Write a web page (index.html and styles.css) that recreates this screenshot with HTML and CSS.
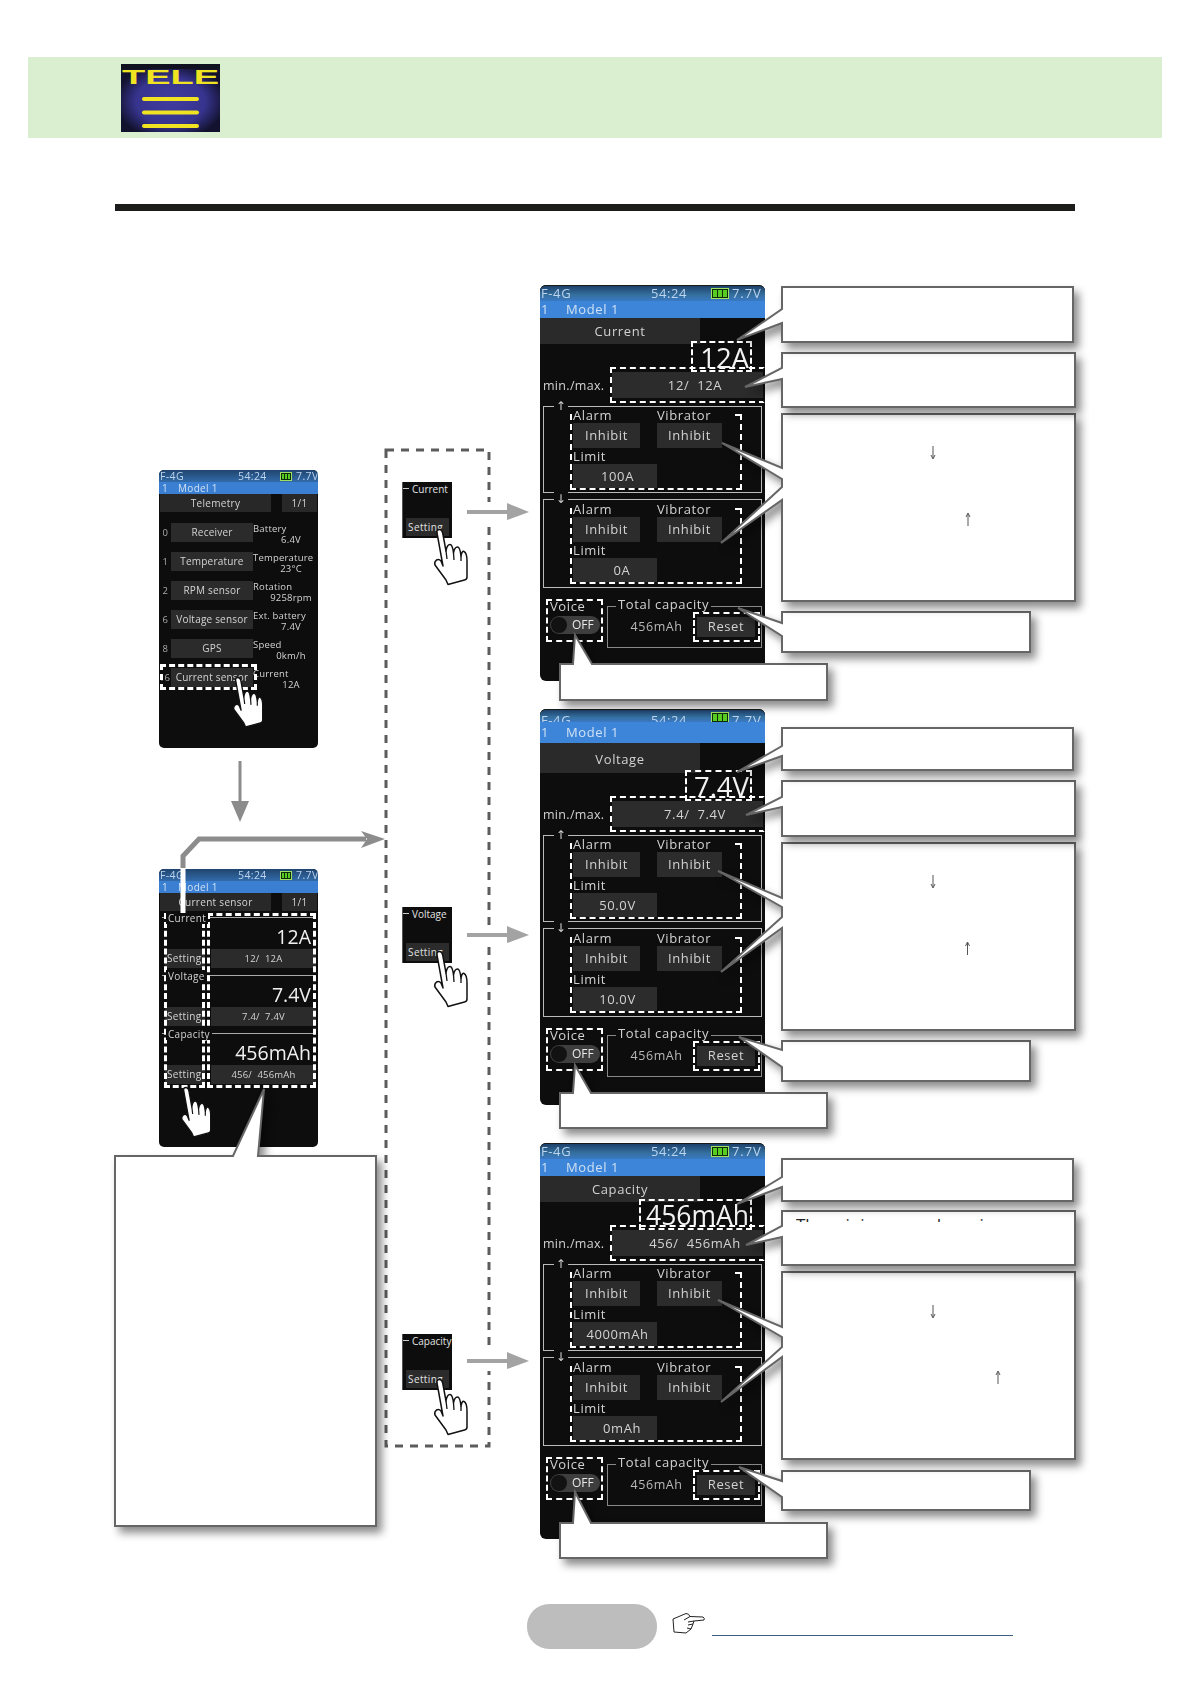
FILE: index.html
```html
<!DOCTYPE html>
<html lang="en">
<head>
<meta charset="utf-8">
<title>Telemetry</title>
<link rel="stylesheet" href="styles.css">
</head>
<body>
<div class="page">
  <header class="band">
    <svg class="logo" viewBox="0 0 99 68" width="99" height="68">
      <defs>
        <radialGradient id="lg" cx="50%" cy="55%" r="56%">
          <stop offset="0" stop-color="#3f3c9f"/>
          <stop offset=".62" stop-color="#37348f"/>
          <stop offset="1" stop-color="#12122e"/>
        </radialGradient>
      </defs>
      <rect width="99" height="68" fill="url(#lg)"/>
      <rect width="99" height="5" fill="#101020"/>
      <text x="1" y="20" font-family="Liberation Sans" font-weight="700" font-size="21" fill="#f0e422" textLength="97" lengthAdjust="spacingAndGlyphs">TELE</text>
      <g stroke="#f0e422" stroke-width="4" stroke-linecap="round">
        <line x1="23" x2="76" y1="35" y2="35"/>
        <line x1="23" x2="76" y1="48.500" y2="48.500"/>
        <line x1="23" x2="76" y1="62" y2="62"/>
      </g>
    </svg>
  </header>
  <div class="rule"></div>

  <main class="diagram">
    <section class="screen-sm node-tele">
      <div class="sm-status"><span>F-4G</span><span>54:24</span><i class="batt"><b></b><b></b><b></b></i><span>7.7V</span></div>
      <div class="sm-model"><span>1</span><span>Model 1</span></div>
      <div class="sm-title"><span class="tab">Telemetry</span><span class="page-no">1/1</span></div>
      <ul class="tele-list">
        <li><span class="num">0</span><span class="tbtn">Receiver</span><span class="info"><em>Battery</em><strong>6.4V</strong></span></li>
        <li><span class="num">1</span><span class="tbtn">Temperature</span><span class="info"><em>Temperature</em><strong>23°C</strong></span></li>
        <li><span class="num">2</span><span class="tbtn">RPM sensor</span><span class="info"><em>Rotation</em><strong>9258rpm</strong></span></li>
        <li><span class="num">6</span><span class="tbtn">Voltage sensor</span><span class="info"><em>Ext. battery</em><strong>7.4V</strong></span></li>
        <li><span class="num">8</span><span class="tbtn">GPS</span><span class="info"><em>Speed</em><strong>0km/h</strong></span></li>
        <li><span class="num">16</span><span class="tbtn">Current sensor</span><span class="info"><em>Current</em><strong>12A</strong></span></li>
      </ul>
      <div class="mark mark-row"></div>
    </section>

    <section class="screen-sm node-sensor">
      <div class="sm-status"><span>F-4G</span><span>54:24</span><i class="batt"><b></b><b></b><b></b></i><span>7.7V</span></div>
      <div class="sm-model"><span>1</span><span>Model 1</span></div>
      <div class="sm-title"><span class="tab">Current sensor</span><span class="page-no">1/1</span></div>
      <div class="sec"><span class="sec-name">Current</span><span class="set">Setting</span><div class="sec-right"><span class="big">12A</span><span class="bar">12/&nbsp; 12A</span></div></div>
      <div class="sec"><span class="sec-name">Voltage</span><span class="set">Setting</span><div class="sec-right"><span class="big">7.4V</span><span class="bar">7.4/&nbsp; 7.4V</span></div></div>
      <div class="sec"><span class="sec-name">Capacity</span><span class="set">Setting</span><div class="sec-right"><span class="big">456mAh</span><span class="bar">456/&nbsp; 456mAh</span></div></div>
      <div class="mark mark-left"></div>
      <div class="mark mark-right"></div>
    </section>

    <div class="chip chip-current"><span class="chip-name">Current</span><span class="chip-set">Setting</span></div>
    <div class="chip chip-voltage"><span class="chip-name">Voltage</span><span class="chip-set">Setting</span></div>
    <div class="chip chip-capacity"><span class="chip-name">Capacity</span><span class="chip-set">Setting</span></div>

    <section class="screen-lg node-current">
      <div class="lg-status"><span>F-4G</span><span>54:24</span><i class="batt"><b></b><b></b><b></b></i><span>7.7V</span></div>
      <div class="lg-model"><span>1</span><span>Model 1</span></div>
      <div class="lg-title"><span class="lg-tab">Current</span></div>
      <div class="lg-value"><span>12A</span></div>
      <div class="lg-minmax"><span class="mm-label">min./max.</span><div class="mm-box"><span class="mm-btn">12/&nbsp; 12A</span></div></div>
      <div class="group"><span class="legend">↑</span><div class="fields"><span class="lbl top">Alarm</span><span class="lbl top">Vibrator</span><span class="fbtn">Inhibit</span><span class="fbtn fbtn-b">Inhibit</span><span class="lbl wide">Limit</span><span class="fbtn limit">100A</span></div></div>
      <div class="group group-down"><span class="legend">↓</span><div class="fields"><span class="lbl top">Alarm</span><span class="lbl top">Vibrator</span><span class="fbtn">Inhibit</span><span class="fbtn fbtn-b">Inhibit</span><span class="lbl wide">Limit</span><span class="fbtn limit limit-short">0A</span></div></div>
      <div class="lg-bottom"><div class="voice"><span>Voice</span><span class="toggle"><i></i>OFF</span></div><div class="total"><span class="total-name">Total capacity</span><span class="total-val">456mAh</span><div class="reset"><span>Reset</span></div></div></div>
    </section>

    <section class="screen-lg tall node-voltage">
      <div class="lg-status"><span>F-4G</span><span>54:24</span><i class="batt"><b></b><b></b><b></b></i><span>7.7V</span></div>
      <div class="lg-model"><span>1</span><span>Model 1</span></div>
      <div class="lg-title"><span class="lg-tab">Voltage</span></div>
      <div class="lg-value"><span>7.4V</span></div>
      <div class="lg-minmax"><span class="mm-label">min./max.</span><div class="mm-box"><span class="mm-btn">7.4/&nbsp; 7.4V</span></div></div>
      <div class="group"><span class="legend">↑</span><div class="fields"><span class="lbl top">Alarm</span><span class="lbl top">Vibrator</span><span class="fbtn">Inhibit</span><span class="fbtn fbtn-b">Inhibit</span><span class="lbl wide">Limit</span><span class="fbtn limit">50.0V</span></div></div>
      <div class="group group-down"><span class="legend">↓</span><div class="fields"><span class="lbl top">Alarm</span><span class="lbl top">Vibrator</span><span class="fbtn">Inhibit</span><span class="fbtn fbtn-b">Inhibit</span><span class="lbl wide">Limit</span><span class="fbtn limit">10.0V</span></div></div>
      <div class="lg-bottom"><div class="voice"><span>Voice</span><span class="toggle"><i></i>OFF</span></div><div class="total"><span class="total-name">Total capacity</span><span class="total-val">456mAh</span><div class="reset"><span>Reset</span></div></div></div>
    </section>

    <section class="screen-lg node-capacity">
      <div class="lg-status"><span>F-4G</span><span>54:24</span><i class="batt"><b></b><b></b><b></b></i><span>7.7V</span></div>
      <div class="lg-model"><span>1</span><span>Model 1</span></div>
      <div class="lg-title"><span class="lg-tab">Capacity</span></div>
      <div class="lg-value lg-value-long"><span>456mAh</span></div>
      <div class="lg-minmax"><span class="mm-label">min./max.</span><div class="mm-box"><span class="mm-btn">456/&nbsp; 456mAh</span></div></div>
      <div class="group"><span class="legend">↑</span><div class="fields"><span class="lbl top">Alarm</span><span class="lbl top">Vibrator</span><span class="fbtn">Inhibit</span><span class="fbtn fbtn-b">Inhibit</span><span class="lbl wide">Limit</span><span class="fbtn limit">4000mAh</span></div></div>
      <div class="group group-down"><span class="legend">↓</span><div class="fields"><span class="lbl top">Alarm</span><span class="lbl top">Vibrator</span><span class="fbtn">Inhibit</span><span class="fbtn fbtn-b">Inhibit</span><span class="lbl wide">Limit</span><span class="fbtn limit limit-short">0mAh</span></div></div>
      <div class="lg-bottom"><div class="voice"><span>Voice</span><span class="toggle"><i></i>OFF</span></div><div class="total"><span class="total-name">Total capacity</span><span class="total-val">456mAh</span><div class="reset"><span>Reset</span></div></div></div>
    </section>

    <svg class="overlay" viewBox="0 211 1190 1393" width="1190" height="1393">
      <defs>
        <g id="hand">
          <path class="hand-fill" d="M9 37 L3 4 Q2.500 .5 5.500 .5 Q8 .5 8.700 4 L12 22 Q13 15.500 16 15.500 Q18.500 15.500 19.500 24 Q20.500 18 23.500 18 Q26 18 27 27 Q28 21.500 30 22.500 Q33 24 33 32 L33 48 Q33 50.500 30.500 51 L14 55.500 L12 51 L1 36 Q0 33 2.500 31 Q5 29.500 7 32 Z"/>
          <path class="hand-line" d="M12 22 L13 30 M19.500 24 L20 31 M27 27 L27 32"/>
        </g>
      </defs>

      <rect class="group-box" x="386" y="450" width="103" height="996"/>
      <line class="gap" x1="480" x2="500" y1="512" y2="512"/>
      <line class="gap" x1="480" x2="500" y1="935" y2="935"/>
      <line class="gap" x1="480" x2="500" y1="1361" y2="1361"/>

      <g class="arrow-light">
        <path d="M467 510 H507 V503 L529 512 L507 520 V514 H467 Z"/>
        <path d="M467 933 H507 V926 L529 935 L507 943 V937 H467 Z"/>
        <path d="M467 1359 H507 V1352 L529 1361 L507 1369 V1363 H467 Z"/>
      </g>
      <path class="arrow-dark" d="M238.500 761 H241.500 V801 H249 L240 822 L231 801 H238.500 Z"/>
      <path class="elbow" d="M183 868 V856 L199 839 H366"/>
      <path class="elbow-white" d="M183 868 V913"/>
      <path class="arrow-dark" d="M385 839 L361 831 L367 839 L361 848 Z"/>

      <g class="callouts">
        <path d="M115 1156 H233 L264 1089 L258 1156 H376 V1526 H115 Z"/>

        <path d="M560 664 H573 L575 635 L592 664 H827 V700 H560 Z"/>
        <path d="M782 612 H1030 V652 H782 V636 L738 608 L782 623 Z"/>
        <path d="M782 414 H1075 V601 H782 V500 L721 543 L782 487 V479 L722 443 L782 468 Z"/>
        <path d="M782 353 H1075 V407 H782 V379 L745 387 L782 368 Z"/>
        <path d="M782 287 H1073 V342 H782 V323 L737 340 L782 309 Z"/>

        <path d="M560 1093 H573 L575 1065 L591 1093 H827 V1128 H560 Z"/>
        <path d="M782 1041 H1030 V1081 H782 V1067 L739 1037 L782 1050 Z"/>
        <path d="M782 843 H1075 V1030 H782 V928 L721 972 L782 917 V907 L718 871 L782 898 Z"/>
        <path d="M782 781 H1075 V836 H782 V807 L746 815 L782 797 Z"/>
        <path d="M782 728 H1073 V770 H782 V756 L737 772 L782 746 Z"/>

        <path d="M560 1523 H573 L575 1492 L591 1523 H827 V1558 H560 Z"/>
        <path d="M782 1471 H1030 V1510 H782 V1497 L739 1467 L782 1481 Z"/>
        <path d="M782 1272 H1075 V1459 H782 V1357 L721 1402 L782 1347 V1337 L718 1300 L782 1327 Z"/>
        <path d="M782 1211 H1075 V1265 H782 V1237 L746 1245 L782 1226 Z"/>
        <path d="M782 1159 H1073 V1201 H782 V1187 L737 1204 L782 1177 Z"/>
      </g>

      <g class="mini-arrows">
        <path d="M933 446 V458 M931 455 L933 459 L935 455"/>
        <path d="M968 526 V514 M966 517 L968 513 L970 517"/>
        <path d="M933 875 V887 M931 884 L933 888 L935 884"/>
        <path d="M967.500 955 V943 M965.500 946 L967.500 942 L969.500 946"/>
        <path d="M933 1305 V1317 M931 1314 L933 1318 L935 1314"/>
        <path d="M998 1384 V1372 M996 1375 L998 1371 L1000 1375"/>
      </g>

      <use href="#hand" transform="translate(233 677) scale(.9)"/>
      <use href="#hand" transform="translate(181 1087) scale(.9)"/>
      <use href="#hand" transform="translate(434 529)"/>
      <use href="#hand" transform="translate(434 951)"/>
      <use href="#hand" transform="translate(434 1379)"/>
    </svg>
    <span class="cut-text">The minimum and maximum</span>
  </main>

  <footer class="foot">
    <div class="pill"></div>
    <svg class="point" viewBox="0 0 34 21" width="34" height="21">
      <path d="M1 6 L14 .5 Q17 .5 18 3.500 L31 4 Q33 5 32 7 L22 8 L21 11 L19 16 L14 20 L2 19 Z M18 3.500 L12 7 M22 8 L16 9 M21 11 L16 12 M19 16 L15 15" fill="#fff" stroke="#222" stroke-width="1"/>
    </svg>
    <div class="link-line"></div>
  </footer>
</div>
</body>
</html>
```

FILE: styles.css
```css
* { box-sizing: border-box; }
html, body { margin: 0; background: #fff; }
body { font-family: "Open Sans", "DejaVu Sans", sans-serif; }
.page { width: 1190px; height: 1684px; overflow: hidden; }

/* header */
.band {
  margin: 57px 28px 0;
  height: 81px;
  padding: 7px 0 0 93px;
  background: #d9efcf;
}
.logo { display: block; }
.rule { margin: 66px 0 0 115px; width: 960px; height: 7px; background: #1d1d1b; }

/* free canvas */
.diagram { position: relative; height: 1393px; }
.overlay { position: absolute; left: 0; top: 0; pointer-events: none; }
.node-tele { left: 159px; top: 259px; }
.node-sensor { left: 159px; top: 658px; }
.node-current { left: 540px; top: 74px; }
.node-voltage { left: 540px; top: 498px; }
.node-capacity { left: 540px; top: 932px; }
.chip-current { left: 402px; top: 271px; }
.chip-voltage { left: 402px; top: 696px; }
.chip-capacity { left: 402px; top: 1123px; }

.group-box { fill: none; stroke: #5c5c5c; stroke-width: 3; stroke-dasharray: 8 7; }
.gap { stroke: #fff; stroke-width: 20; }
.arrow-light { fill: #a3a3a3; }
.arrow-dark { fill: #8c8c8c; }
.elbow { fill: none; stroke: #8c8c8c; stroke-width: 5; }
.elbow-white { fill: none; stroke: #fff; stroke-width: 5; }
.callouts path {
  fill: #fff;
  stroke: #666;
  stroke-width: 2;
  filter: drop-shadow(5px 6px 4px rgba(0, 0, 0, .45));
}
.mini-arrows path { fill: none; stroke: #555; stroke-width: 1; }
.hand-fill { fill: #fff; stroke: #111; stroke-width: 1.500; stroke-linejoin: round; }
.hand-line { fill: none; stroke: #111; stroke-width: 1.300; }

.cut-text {
  position: absolute;
  left: 796px;
  top: 1007px;
  height: 4px;
  overflow: hidden;
  font-size: 17px;
  line-height: 13px;
  color: #222;
  white-space: nowrap;
}

/* battery */
.batt { display: flex; gap: 1px; height: 11px; padding: 1px; background: #0c2a0c; border: 1px solid #9fe060; }
.batt b { flex: 1; background: #58cc20; }

/* small screens */
.screen-sm {
  position: absolute;
  width: 159px;
  height: 278px;
  background: #0d0d0d;
  border-radius: 5px;
  overflow: hidden;
  color: #d4d4d4;
  font-size: 10px;
  filter: blur(.3px);
}
.sm-status {
  display: grid;
  grid-template-columns: 78px 42px 12px 1fr;
  height: 12px;
  padding-left: 1px;
  line-height: 12px;
  font-size: 10.500px;
  letter-spacing: .4px;
  color: #bcd4ee;
  background: linear-gradient(#20456f, #326ba9);
}
.sm-status span:last-child { padding-left: 4px; }
.sm-status .batt { height: 9px; margin-top: 2px; }
.sm-model {
  display: flex;
  gap: 10px;
  height: 12px;
  padding-left: 3px;
  line-height: 12px;
  letter-spacing: .3px;
  color: #cfe1f5;
  background: #3a7fd2;
}
.sm-title { display: flex; height: 18px; background: #0d0d0d; line-height: 18px; font-size: 10px; letter-spacing: .3px; }
.tab { width: 111px; margin-left: 1px; background: #282828; text-align: center; }
.page-no { width: 35px; margin-left: 11px; background: #282828; text-align: center; }

.tele-list { list-style: none; margin: 11px 0 0; padding: 0; }
.tele-list li { display: flex; height: 29px; }
.num { width: 12px; text-align: right; line-height: 19px; padding-right: 3px; color: #aaa; font-size: 9.500px; }
.tbtn {
  width: 82px;
  height: 19px;
  line-height: 19px;
  text-align: center;
  background: #2b2b2b;
  letter-spacing: .2px;
  white-space: nowrap;
}
.info { display: flex; flex-direction: column; width: 65px; font-size: 9.500px; line-height: 11px; letter-spacing: .2px; }
.info em { font-style: normal; white-space: nowrap; }
.info strong { font-weight: 400; text-align: center; padding-left: 11px; white-space: nowrap; }

.mark { position: absolute; border: 3px dashed #fff; }
.mark-row { left: 1px; top: 194px; width: 97px; height: 26px; }
.mark-left { left: 5px; top: 44px; width: 41px; height: 175px; }
.mark-right { left: 48px; top: 44px; width: 109px; height: 175px; }

.sec {
  position: relative;
  display: flex;
  align-items: flex-end;
  height: 58px;
  padding: 0 2px 1px 6px;
}
.sec-name {
  position: absolute;
  left: 7px;
  top: 1px;
  padding: 0 2px;
  font-size: 10px;
  line-height: 12px;
  letter-spacing: .3px;
  background: #0d0d0d;
  z-index: 1;
}
.sec::before { content: ""; position: absolute; left: 3px; right: 2px; top: 6px; border-top: 1px solid #aaa; }
.set { width: 40px; height: 19px; padding-left: 2px; line-height: 19px; background: #2b2b2b; font-size: 10px; letter-spacing: .3px; white-space: nowrap; }
.sec-right { display: flex; flex-direction: column; align-items: stretch; margin-left: 6px; flex: 1; }
.big { font-size: 19.500px; line-height: 24px; text-align: right; padding-right: 5px; color: #f0f0f0; }
.bar { height: 19px; line-height: 19px; text-align: center; background: #2b2b2b; font-size: 9.500px; letter-spacing: .2px; }

/* chips */
.chip {
  position: absolute;
  display: flex;
  flex-direction: column;
  justify-content: space-between;
  width: 50px;
  height: 56px;
  padding: 0 3px 2px 3px;
  border-left: 1px solid #555;
  background: #0d0d0d;
  color: #e2e2e2;
  font-size: 10px;
  white-space: nowrap;
}
.chip-name { position: relative; line-height: 14px; padding-left: 6px; }
.chip-name::before { content: ""; position: absolute; left: -3px; top: 6px; width: 6px; border-top: 1px solid #ccc; }
.chip-set { height: 18px; line-height: 18px; padding-left: 2px; background: #2b2b2b; letter-spacing: .4px; }

/* large screens */
.screen-lg {
  position: absolute;
  width: 225px;
  height: 396px;
  background: #0d0d0d;
  border-radius: 6px 6px 0 6px;
  color: #d2d2d2;
  font-size: 13px;
  letter-spacing: .6px;
  filter: blur(.3px);
}
.lg-status {
  display: grid;
  grid-template-columns: 110px 60px 20px 1fr;
  height: 16px;
  overflow: hidden;
  padding-left: 1px;
  line-height: 15px;
  color: #bcd4ee;
  background: linear-gradient(#1e426c, #35709f 60%, #3a79c4);
  border-radius: 6px 6px 0 0;
  border-top: 1px solid #1a1a1a;
}
.lg-status .batt { height: 11px; width: 18px; margin-top: 2px; }
.lg-status span:last-child { padding-left: 1px; letter-spacing: .9px; }
.lg-model {
  display: flex;
  gap: 17px;
  height: 17px;
  padding-left: 1px;
  line-height: 17px;
  color: #cfe1f5;
  background: #3d85d8;
}
.lg-title { height: 26px; }
.lg-tab { display: block; width: 160px; height: 100%; line-height: 26px; text-align: center; background: #2a2a2a; }

/* the middle screen has a clipped status row and a taller title */
.tall .lg-status { height: 13px; line-height: 20px; }
.tall .lg-model { height: 21px; line-height: 20px; }
.tall .lg-title { height: 30px; }
.tall .lg-tab { line-height: 33px; }

.lg-value { display: flex; justify-content: flex-end; height: 28px; padding-right: 13px; }
.lg-value span {
  position: relative;
  z-index: 1;
  height: 31px;
  margin-top: -3px;
  padding: 0 1px 0 7px;
  border: 2px dashed #fff;
  font-size: 27.500px;
  line-height: 29px;
  letter-spacing: 0;
  color: #f2f2f2;
}
.lg-value-long span { padding: 0 1px 0 5px; font-size: 26.500px; }
.lg-minmax { display: flex; height: 36px; margin-top: -5px; }
.mm-label { width: 70px; padding: 11px 0 0 3px; line-height: 16px; letter-spacing: .3px; font-size: 12.500px; white-space: nowrap; }
.mm-box { width: 155px; height: 36px; padding-top: 3px; border: 2px dashed #fff; border-right-color: #0d0d0d; }
.mm-btn { display: block; height: 26px; padding-left: 15px; line-height: 26px; text-align: center; background: #2c2c2c; white-space: nowrap; }

.group {
  position: relative;
  width: 219px;
  height: 87px;
  margin: 3px 0 0 3px;
  padding: 7px 0 0 26px;
  border: 1px solid #bbb;
}
.group-down { height: 89px; margin-top: 6px; padding-top: 8px; }
.legend {
  position: absolute;
  left: 10px;
  top: -9px;
  width: 14px;
  height: 16px;
  line-height: 16px;
  text-align: center;
  background: #0d0d0d;
  font-family: "DejaVu Sans", sans-serif;
  font-size: 12px;
}
.fields {
  position: relative;
  display: grid;
  grid-template-columns: 84px 1fr;
  grid-template-rows: 9px 25px 16px 24px;
  width: 172px;
  height: 76px;
  padding-left: 1px;
  border: 2px dashed #fff;
  border-top: 0;
}
.fields::before { content: ""; position: absolute; right: -2px; top: 0; width: 7px; border-top: 2px dashed #fff; }
.lbl { line-height: 16px; white-space: nowrap; }
.lbl.top { line-height: 3px; }
.wide { grid-column: 1 / 3; }
.fbtn { width: 67px; line-height: 25px; text-align: center; background: #2c2c2c; }
.fbtn-b { width: 65px; }
.limit { width: 84px; grid-column: 1 / 3; padding-left: 5px; line-height: 24px; }
.limit-short { padding-left: 14px; }

.lg-bottom { display: flex; margin: 11px 0 0 6px; }
.voice { display: flex; flex-direction: column; width: 57px; height: 43px; padding-left: 2px; border: 2px dashed #fff; }
.voice span:first-child { line-height: 14px; margin-top: -2px; }
.toggle {
  position: relative;
  width: 50px;
  height: 18px;
  margin-top: 3px;
  padding-left: 22px;
  line-height: 18px;
  font-size: 12px;
  letter-spacing: 0;
  border-radius: 9px;
  background: #3e3e3e;
  color: #e8e8e8;
}
.toggle i { position: absolute; left: 1px; top: 1px; width: 16px; height: 16px; border-radius: 50%; background: #121212; }
.total {
  position: relative;
  display: flex;
  width: 155px;
  height: 42px;
  margin: 7px 0 0 4px;
  padding-left: 12px;
  border: 1px solid #888;
}
.total-name { position: absolute; left: 8px; top: -11px; padding: 0 2px; line-height: 16px; background: #0d0d0d; white-space: nowrap; }
.total-val { width: 73px; line-height: 40px; font-size: 12.500px; text-align: center; color: #b8b8b8; }
.reset { width: 67px; height: 30px; margin-top: 5px; padding: 3px 0 0 2px; border: 2px dashed #fff; }
.reset span { display: block; width: 58px; height: 20px; line-height: 18px; text-align: center; background: #2e2e2e; }

/* footer */
.foot { display: flex; align-items: flex-start; padding-left: 527px; }
.pill { width: 130px; height: 45px; border-radius: 22px; background: #bdbdbd; }
.point { margin: 9px 0 0 15px; }
.link-line { width: 301px; height: 1px; margin: 31px 0 0 6px; background: #3b5f7f; }
```
